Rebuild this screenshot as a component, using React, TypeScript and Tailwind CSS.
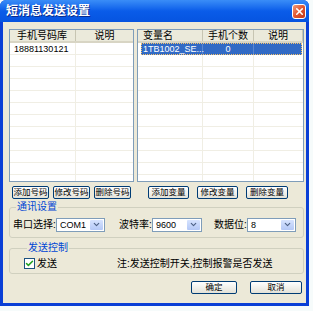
import { Check, ChevronDown, X } from "lucide-react";

const font = "font-['Liberation_Sans','Noto_Sans_CJK_SC',sans-serif]";

function XpButton({ label, className = "" }: { label: string; className?: string }) {
  return (
    <button
      className={`h-[13px] whitespace-nowrap rounded-[2px] border border-[#003C74] bg-gradient-to-b from-white to-[#E3E2D8] text-[8.5px] leading-[11px] text-black ${className}`}
    >
      {label}
    </button>
  );
}

function Combo({ value, className = "" }: { value: string; className?: string }) {
  return (
    <div
      className={`flex h-[14px] items-center border border-[#7F9DB9] bg-white pl-[3px] pr-[1px] ${className}`}
    >
      <span className="flex-1 text-[9px] leading-[10px] text-black">{value}</span>
      <span className="flex h-[10px] w-[13px] items-center justify-center rounded-[1px] bg-gradient-to-b from-[#D6E3FE] to-[#B4C8F6]">
        <ChevronDown className="h-[9px] w-[9px] text-[#4D6185]" strokeWidth={3} />
      </span>
    </div>
  );
}

function HeaderCell({ label, className = "" }: { label: string; className?: string }) {
  return (
    <div
      className={`flex h-full items-center whitespace-nowrap border-r border-[#C7C5B2] text-[10px] text-black ${className}`}
    >
      {label}
    </div>
  );
}

function PhoneList() {
  const rows = Array.from({ length: 12 });
  return (
    <div className="h-[153px] w-[125px] overflow-hidden border border-[#7F9DB9] bg-white">
      <div className="flex h-[13px] border-b-2 border-[#D8D5C4] bg-[#EBEADB]">
        <HeaderCell label="手机号码库" className="w-[66px] pl-[7px]" />
        <HeaderCell label="说明" className="flex-1 justify-center border-r-0" />
      </div>
      {rows.map((_, i) => (
        <div key={i} className="flex h-[12px] border-b border-[#F0EEE4]">
          <div className="w-[66px] border-r border-[#F0EEE4] pl-[4px] text-[9px] leading-[12px] text-black">
            {i === 0 ? "18881130121" : ""}
          </div>
          <div className="flex-1" />
        </div>
      ))}
    </div>
  );
}

function VarList() {
  const rows = Array.from({ length: 12 });
  return (
    <div className="h-[153px] w-[167px] overflow-hidden border border-[#7F9DB9] bg-white">
      <div className="flex h-[13px] border-b-2 border-[#D8D5C4] bg-[#EBEADB]">
        <HeaderCell label="变量名" className="w-[65px] pl-[5px]" />
        <HeaderCell label="手机个数" className="w-[51px] justify-center" />
        <HeaderCell label="说明" className="w-[49px] justify-center" />
      </div>
      {rows.map((_, i) =>
        i === 0 ? (
          <div
            key={i}
            className="ml-[3px] mr-[1px] flex h-[12px] border border-dotted border-[#F5C26B] bg-[#316AC5] text-white"
          >
            <div className="w-[61px] border-r border-[#5A86D0] pl-[1px] text-[9px] leading-[10px]">
              1TB1002_SE...
            </div>
            <div className="w-[51px] border-r border-[#5A86D0] text-center text-[9px] leading-[10px]">0</div>
            <div className="flex-1" />
          </div>
        ) : (
          <div key={i} className="flex h-[12px] border-b border-[#F0EEE4]">
            <div className="w-[65px] border-r border-[#F0EEE4]" />
            <div className="w-[51px] border-r border-[#F0EEE4]" />
            <div className="flex-1" />
          </div>
        )
      )}
    </div>
  );
}

export default function App() {
  return (
    <div className={`h-[311px] w-[313px] bg-[#F6FBFB] ${font}`}>
      <div className="flex h-[306px] w-[309px] flex-col overflow-hidden rounded-t-[6px] bg-[#0A3FD6]">
        {/* title bar */}
        <div className="flex h-[22px] items-center bg-gradient-to-b from-[#3A8DF7] via-[#0A5CE9] to-[#0654E0] pl-[6px] pr-[3px]">
          <span className="flex-1 text-[12px] font-bold text-white [text-shadow:1px_1px_0_#0A2C8C]">
            短消息发送设置
          </span>
          <span className="flex h-[15px] w-[14px] items-center justify-center rounded-[3px] border border-white bg-gradient-to-br from-[#F09A7A] via-[#E0552F] to-[#C2391A]">
            <X className="h-[11px] w-[11px] text-white" strokeWidth={3.5} />
          </span>
        </div>

        {/* body */}
        <div className="mx-[3px] mb-[3px] flex flex-1 flex-col bg-[#ECE9D8] pl-[6px] pr-[2px] pt-[7px]">
          <div className="flex gap-[3px]">
            <PhoneList />
            <VarList />
          </div>

          <div className="mt-[4px] flex">
            <div className="flex w-[125px] gap-[4px] pl-[3px]">
              <XpButton label="添加号码" className="w-[37px]" />
              <XpButton label="修改号码" className="w-[37px]" />
              <XpButton label="删除号码" className="w-[37px]" />
            </div>
            <div className="ml-[14px] flex gap-[8px]">
              <XpButton label="添加变量" className="w-[41px]" />
              <XpButton label="修改变量" className="w-[41px]" />
              <XpButton label="删除变量" className="w-[42px]" />
            </div>
          </div>

          <fieldset className="mt-[2px] h-[37px] w-[295px] rounded-[3px] border border-[#D0D0BF] pl-[3px]">
            <legend className="ml-[3px] px-[1px] text-[10px] leading-[12px] text-[#0046D5]">通讯设置</legend>
            <div className="mt-[4px] flex items-center text-[10px] text-black">
              <span className="w-[43px]">串口选择:</span>
              <Combo value="COM1" className="w-[49px]" />
              <span className="ml-[14px] w-[33px]">波特率:</span>
              <Combo value="9600" className="w-[50px]" />
              <span className="ml-[12px] w-[33px]">数据位:</span>
              <Combo value="8" className="w-[49px]" />
            </div>
          </fieldset>

          <fieldset className="mt-[4px] h-[32px] w-[295px] rounded-[3px] border border-[#D0D0BF] pl-[14px]">
            <legend className="ml-[3px] px-[1px] text-[10px] leading-[12px] text-[#0046D5]">发送控制</legend>
            <div className="mt-[2px] flex items-center text-[10px] text-black">
              <span className="flex h-[11px] w-[11px] items-center justify-center border border-[#1C5180] bg-white">
                <Check className="h-[9px] w-[9px] text-[#21A121]" strokeWidth={4} />
              </span>
              <span className="ml-[2px]">发送</span>
              <span className="ml-[60px]">注:发送控制开关,控制报警是否发送</span>
            </div>
          </fieldset>

          <div className="mt-[7px] flex justify-end gap-[13px] pr-[2px]">
            <XpButton label="确定" className="w-[46px]" />
            <XpButton label="取消" className="w-[52px]" />
          </div>
        </div>
      </div>
    </div>
  );
}
